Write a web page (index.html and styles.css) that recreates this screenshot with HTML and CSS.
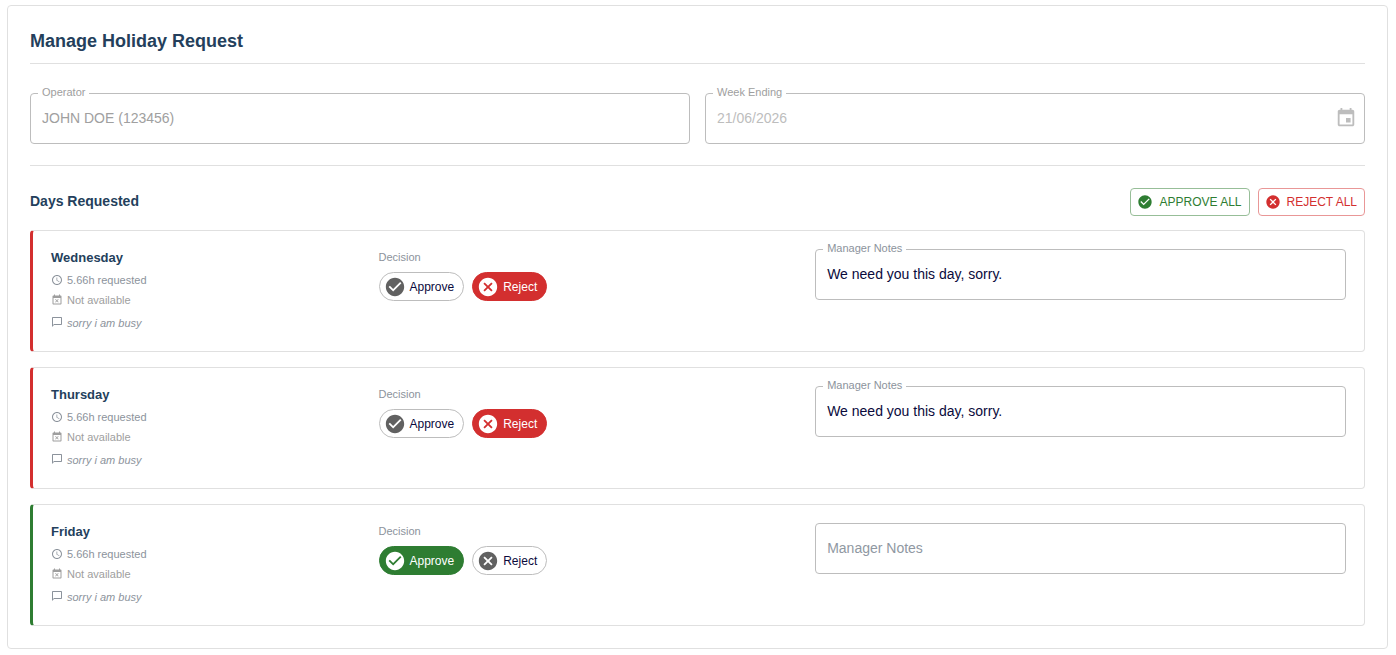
FILE: index.html
```html
<!DOCTYPE html>
<html lang="en">
<head>
    <meta charset="UTF-8">
    <meta name="viewport" content="width=device-width, initial-scale=1.0">
    <title>Manage Holiday Request</title>
    <link rel="stylesheet" href="styles.css">
</head>
<body>

<!-- Shared icons -->
<svg class="icon-defs" aria-hidden="true">
    <symbol id="icon-check" viewBox="0 0 24 24"><path d="M12 2C6.48 2 2 6.48 2 12s4.48 10 10 10 10-4.48 10-10S17.52 2 12 2zm-2 15l-5-5 1.41-1.41L10 14.17l7.59-7.59L19 8l-9 9z"/></symbol>
    <symbol id="icon-cancel" viewBox="0 0 24 24"><path d="M12 2C6.47 2 2 6.47 2 12s4.47 10 10 10 10-4.47 10-10S17.53 2 12 2zm5 13.59L15.59 17 12 13.41 8.41 17 7 15.59 10.59 12 7 8.41 8.41 7 12 10.59 15.59 7 17 8.41 13.41 12 17 15.59z"/></symbol>
    <symbol id="icon-clock" viewBox="0 0 24 24"><path d="M11.99 2C6.47 2 2 6.48 2 12s4.47 10 9.99 10C17.52 22 22 17.52 22 12S17.52 2 11.99 2zM12 20c-4.42 0-8-3.58-8-8s3.58-8 8-8 8 3.58 8 8-3.58 8-8 8zm.5-13H11v6l5.25 3.15.75-1.23-4.5-2.67z"/></symbol>
    <symbol id="icon-busy" viewBox="0 0 24 24"><path d="M9.31 17l2.44-2.44L14.19 17l1.06-1.06-2.44-2.44 2.44-2.44L14.19 10l-2.44 2.44L9.31 10l-1.06 1.06 2.44 2.44-2.44 2.44L9.31 17zM19 3h-1V1h-2v2H8V1H6v2H5c-1.11 0-1.99.9-1.99 2L3 19c0 1.1.89 2 2 2h14c1.1 0 2-.9 2-2V5c0-1.1-.9-2-2-2zm0 16H5V8h14v11z"/></symbol>
    <symbol id="icon-comment" viewBox="0 0 24 24"><path d="M20 2H4c-1.1 0-2 .9-2 2v18l4-4h14c1.1 0 2-.9 2-2V4c0-1.1-.9-2-2-2zm0 14H6l-2 2V4h16v12z"/></symbol>
    <symbol id="icon-calendar" viewBox="0 0 24 24"><path d="M17 12h-5v5h5v-5zM16 1v2H8V1H6v2H5c-1.11 0-1.99.9-1.99 2L3 19c0 1.1.89 2 2 2h14c1.1 0 2-.9 2-2V5c0-1.1-.9-2-2-2h-1V1h-2zm3 18H5V8h14v11z"/></symbol>
</svg>

<main class="panel">
    <h1>Manage Holiday Request</h1>

    <div class="details">
        <div class="field disabled">
            <input type="text" id="operator" value="JOHN DOE (123456)" disabled>
            <label for="operator">Operator</label>
        </div>
        <div class="field disabled date">
            <input type="text" id="weekEnding" value="21/06/2026" disabled>
            <label for="weekEnding">Week Ending</label>
            <button class="date-button" aria-label="Choose date" disabled><svg><use href="#icon-calendar"/></svg></button>
        </div>
    </div>

    <div class="days-header">
        <h2>Days Requested</h2>
        <div class="actions">
            <button class="all approve-all"><svg><use href="#icon-check"/></svg>APPROVE ALL</button>
            <button class="all reject-all"><svg><use href="#icon-cancel"/></svg>REJECT ALL</button>
        </div>
    </div>

    <div class="days">
        <section class="day rejected">
            <div class="info">
                <h3>Wednesday</h3>
                <p class="hours"><svg><use href="#icon-clock"/></svg>5.66h requested</p>
                <p class="availability"><svg><use href="#icon-busy"/></svg>Not available</p>
                <p class="comment"><svg><use href="#icon-comment"/></svg>sorry i am busy</p>
            </div>
            <div class="decision">
                <p>Decision</p>
                <div class="chips">
                    <button class="chip"><svg><use href="#icon-check"/></svg>Approve</button>
                    <button class="chip selected-reject"><svg><use href="#icon-cancel"/></svg>Reject</button>
                </div>
            </div>
            <div class="field notes">
                <textarea id="notesWednesday" rows="1">We need you this day, sorry.</textarea>
                <label for="notesWednesday">Manager Notes</label>
            </div>
        </section>

        <section class="day rejected">
            <div class="info">
                <h3>Thursday</h3>
                <p class="hours"><svg><use href="#icon-clock"/></svg>5.66h requested</p>
                <p class="availability"><svg><use href="#icon-busy"/></svg>Not available</p>
                <p class="comment"><svg><use href="#icon-comment"/></svg>sorry i am busy</p>
            </div>
            <div class="decision">
                <p>Decision</p>
                <div class="chips">
                    <button class="chip"><svg><use href="#icon-check"/></svg>Approve</button>
                    <button class="chip selected-reject"><svg><use href="#icon-cancel"/></svg>Reject</button>
                </div>
            </div>
            <div class="field notes">
                <textarea id="notesThursday" rows="1">We need you this day, sorry.</textarea>
                <label for="notesThursday">Manager Notes</label>
            </div>
        </section>

        <section class="day approved">
            <div class="info">
                <h3>Friday</h3>
                <p class="hours"><svg><use href="#icon-clock"/></svg>5.66h requested</p>
                <p class="availability"><svg><use href="#icon-busy"/></svg>Not available</p>
                <p class="comment"><svg><use href="#icon-comment"/></svg>sorry i am busy</p>
            </div>
            <div class="decision">
                <p>Decision</p>
                <div class="chips">
                    <button class="chip selected-approve"><svg><use href="#icon-check"/></svg>Approve</button>
                    <button class="chip"><svg><use href="#icon-cancel"/></svg>Reject</button>
                </div>
            </div>
            <div class="field notes">
                <textarea rows="1" placeholder="Manager Notes" aria-label="Manager Notes"></textarea>
            </div>
        </section>
    </div>
</main>

</body>
</html>
```
FILE: styles.css
```css
* { box-sizing: border-box; }
body {
    margin: 5px 8px 7px 7px;
    background: #fff;
    color: #0a0a3c;
    font-family: "Liberation Sans", Arial, sans-serif;
}
h1, h2, h3, p { margin: 0; }
svg { fill: currentColor; flex: none; }
.icon-defs { display: none; }
button, input, textarea { font-family: inherit; }

.panel {
    padding: 22px;
    border: 1px solid #e0e0e0;
    border-radius: 4px;
}
h1 {
    padding-bottom: 9px;
    border-bottom: 1px solid #e0e0e0;
    color: #243f5c;
    font-size: 18px;
    line-height: 26px;
}
.details {
    display: grid;
    grid-template-columns: 1fr 1fr;
    gap: 15px;
    padding: 29px 0 21px;
    border-bottom: 1px solid #e0e0e0;
}

/* Outlined text fields */
.field { position: relative; }
.field input, .field textarea {
    display: block;
    width: 100%;
    height: 51px;
    padding: 0 11px 2px;
    border: 1px solid #bdbdbd;
    border-radius: 4px;
    background: transparent;
    color: #0a0a3c;
    font-size: 14px;
    resize: none;
}
.field textarea {
    padding: 15px 11px;
    line-height: 18px;
}
.field textarea::placeholder { color: #9098a2; }
.field.disabled input { color: #a0a0a0; }
.field.date input { color: #bdbdbd; }
.field label {
    position: absolute;
    top: -8px;
    left: 8px;
    padding: 0 4px;
    background: #fff;
    color: #8c939c;
    font-size: 11px;
    line-height: 14px;
}
.field.disabled label { color: #9e9e9e; }
.date-button {
    position: absolute;
    top: 14px;
    right: 8px;
    padding: 0;
    border: 0;
    background: none;
    color: #bdbdbd;
}
.date-button svg {
    display: block;
    width: 22px;
    height: 22px;
}

.days-header {
    display: flex;
    justify-content: space-between;
    align-items: flex-start;
    padding: 22px 0 14px;
}
h2 {
    color: #243f5c;
    font-size: 14px;
    line-height: 26px;
}
.actions { display: flex; gap: 8px; }
.all {
    display: flex;
    align-items: center;
    gap: 6px;
    height: 28px;
    padding: 0 7px 0 6px;
    border: 1px solid;
    border-radius: 4px;
    background: #fff;
    font-size: 12px;
}
.all svg { width: 16px; height: 16px; }
.approve-all { border-color: #97be98; color: #2e7d32; }
.reject-all { border-color: #e99797; color: #d32f2f; }

/* Day cards */
.days { display: grid; gap: 15px; }
.day {
    display: grid;
    grid-template-columns: repeat(12, 1fr);
    gap: 15px;
    padding: 18px;
    border: 1px solid #e0e0e0;
    border-left-width: 3px;
    border-radius: 4px;
}
.rejected { border-left-color: #d32f2f; }
.approved { border-left-color: #2e7d32; }
.info { grid-column: span 3; }
.decision { grid-column: span 4; }
.notes { grid-column: span 5; }
h3 {
    margin-bottom: 3px;
    color: #243f5c;
    font-size: 13px;
    line-height: 18px;
}
.info p {
    display: flex;
    align-items: center;
    gap: 4px;
    color: #8c939c;
    font-size: 11px;
    line-height: 20px;
}
.info svg { width: 12px; height: 12px; }
.info .availability { color: #9e9e9e; }
.info .comment {
    margin-top: 3px;
    font-style: italic;
}
.info .comment svg { margin-bottom: 3px; }
.decision p {
    margin-bottom: 7px;
    color: #8c939c;
    font-size: 11px;
    line-height: 16px;
}
.chips { display: flex; gap: 8px; }
.chip {
    display: flex;
    align-items: center;
    gap: 4px;
    height: 29px;
    padding: 0 9px 0 4px;
    border: 1px solid #bdbdbd;
    border-radius: 15px;
    background: #fff;
    color: #0a0a3c;
    font-size: 12px;
}
.chip svg {
    width: 22px;
    height: 22px;
    color: #616161;
}
.chip.selected-approve { border-color: #2e7d32; background: #2e7d32; color: #fff; }
.chip.selected-reject { border-color: #d32f2f; background: #d32f2f; color: #fff; }
.chip.selected-approve svg, .chip.selected-reject svg { color: #fff; }
```
